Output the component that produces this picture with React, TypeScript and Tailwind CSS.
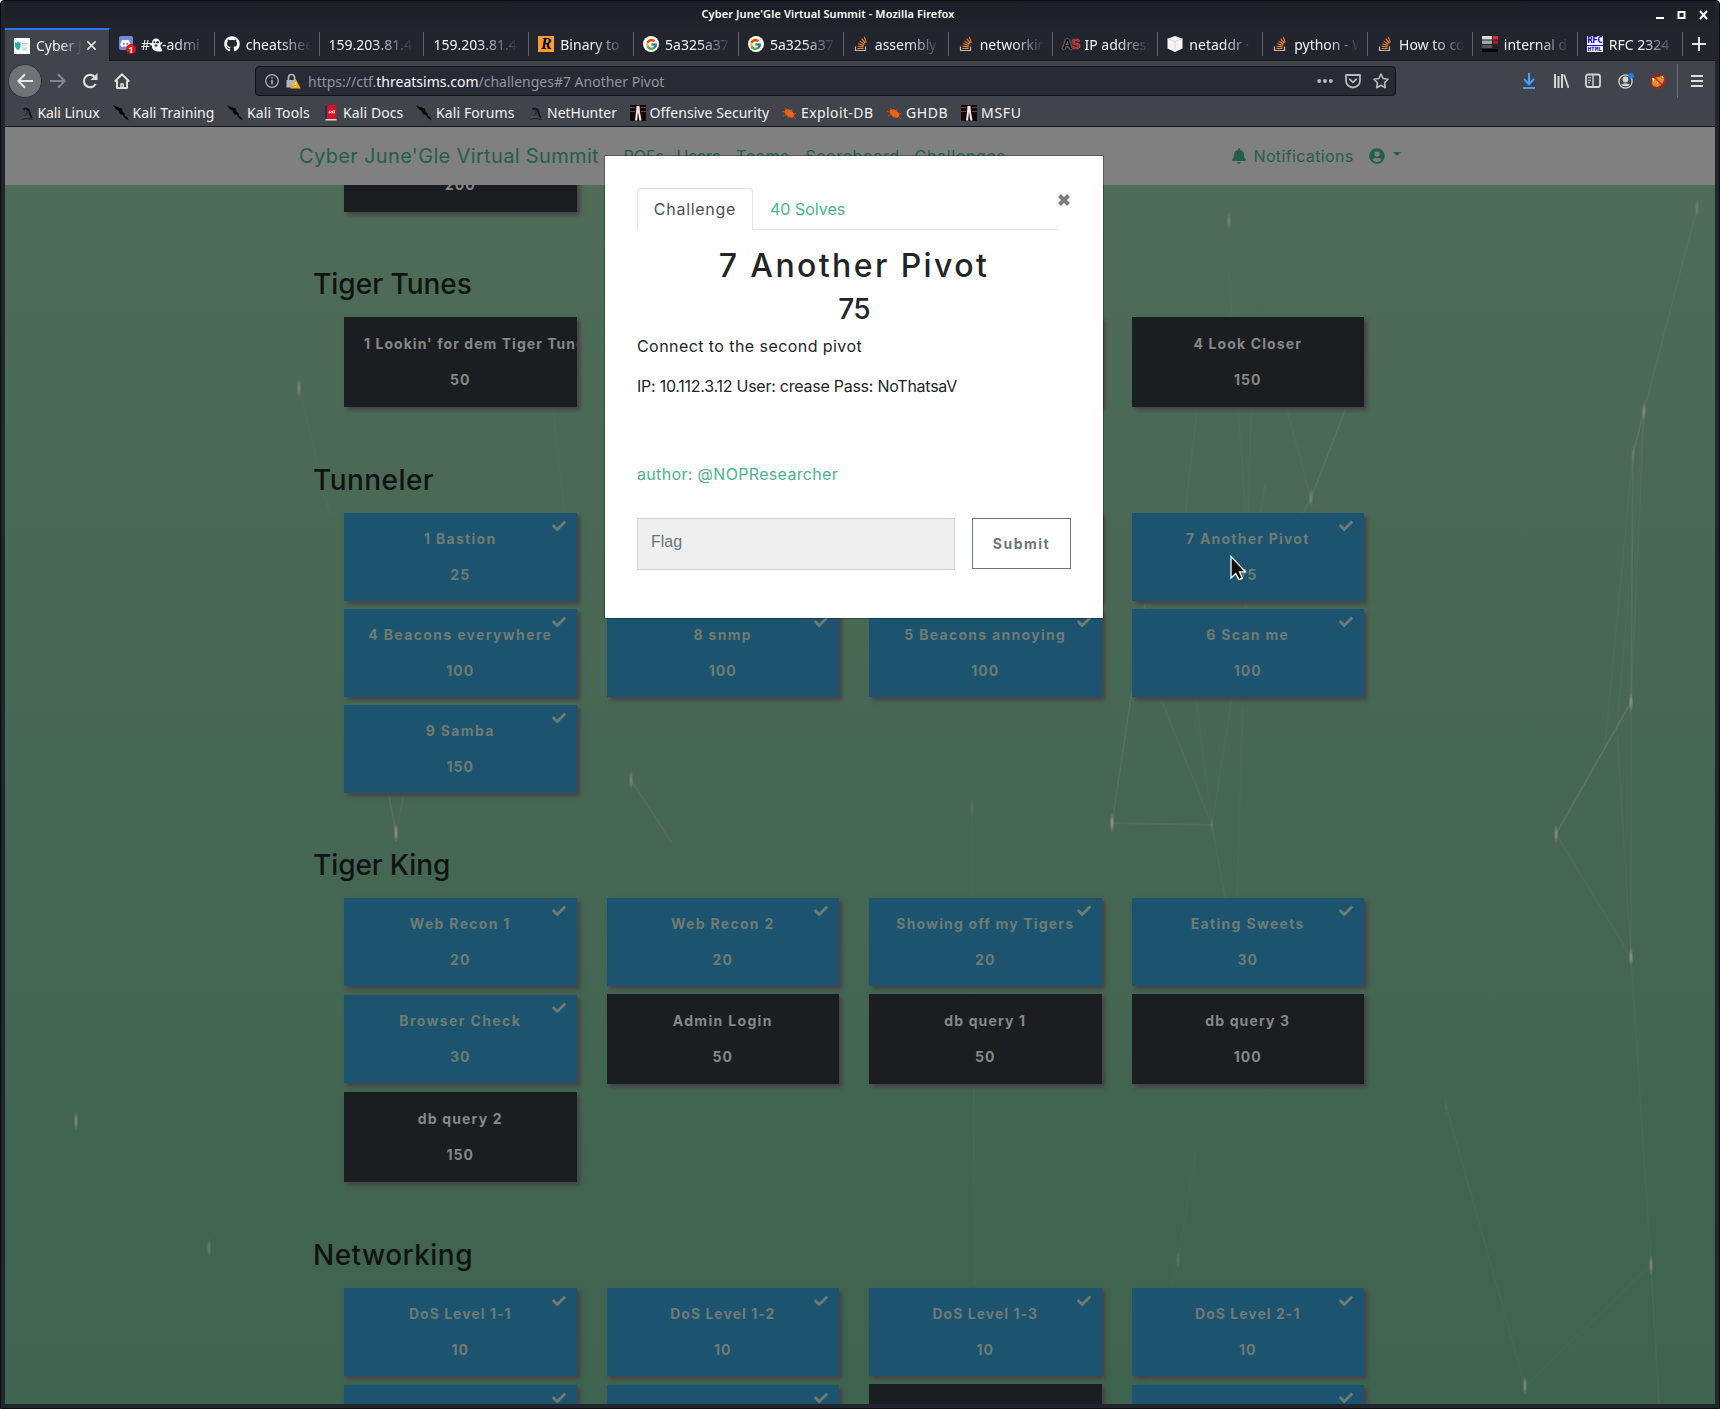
import type { ReactNode } from "react";
import { FaBell, FaCheck, FaDiscord, FaGithub, FaUserCircle } from "react-icons/fa";
import { FcGoogle } from "react-icons/fc";

/* ---------- favicons ---------- */

const StackIcon = () => (
  <svg viewBox="0 0 16 16" className="size-4" fill="none">
    <path d="M2.5 10.5v4h10v-4" stroke="#bcbbbb" strokeWidth="1.2" />
    <path d="M4.5 12.5h6M4.6 10.3l6 .6M5.2 7.8l5.7 1.6M6.6 5.1l5 3.1M8.6 2.6l3.7 4.5M11.4 1l1.8 5.6" stroke="#f48024" strokeWidth="1.1" />
  </svg>
);

const SummitIcon = () => (
  <svg viewBox="0 0 16 16" className="size-4">
    <rect width="16" height="16" fill="#fff" />
    <path d="M1 4l1.500 1L4 3l1 2 1.500-1v5l-1.500 3-2-1-2-2z" fill="#2a9fd8" />
    <path d="M3 7l2 1-1 4-2-2z" fill="#3db65c" />
    <path d="M7.500 5.500H14M7.500 7H13M8.500 10h4.500M8.500 11.500h4" stroke="#8fd5b8" strokeWidth=".9" />
  </svg>
);

const DiscordIcon = () => (
  <span className="relative block size-4">
    <span className="flex size-[14px] items-center justify-center rounded-[2px] bg-[#7289da] text-white">
      <FaDiscord size={11} />
    </span>
    <span className="absolute -right-px -bottom-[2px] flex size-[10px] items-center justify-center rounded-full bg-[#dc1414] text-[9px] leading-none font-bold text-white">
      1
    </span>
  </span>
);

const RapidIcon = () => (
  <span className="flex size-4 items-center justify-center bg-[#ff9d2e] font-['Liberation_Serif',serif] text-[16px] leading-none font-bold text-black italic">R</span>
);

const GoogleIcon = () => (
  <span className="flex size-4 items-center justify-center rounded-full bg-white">
    <FcGoogle size={13} />
  </span>
);

const AsIcon = () => (
  <span className="flex size-4 items-center justify-center font-['Liberation_Sans',sans-serif] text-[14px] leading-none font-bold tracking-[-1.5px]">
    <span className="text-black [text-shadow:0_0_1px_#ddd,0_0_2px_#999]">A</span>
    <span className="text-[#c8202c] [text-shadow:0_0_1px_#bbb]">S</span>
  </span>
);

const CubeIcon = () => (
  <svg viewBox="0 0 16 16" className="size-4">
    <path d="M8 0l7.500 2.700v9.800L8 16 .5 12.500V2.700z" fill="#f5f3f1" />
    <path d="M.5 2.700L8 5.500l7.500-2.800M8 5.500V16" stroke="#d9d5d2" strokeWidth=".9" fill="none" />
  </svg>
);

const BarsIcon = () => (
  <svg viewBox="0 0 16 16" className="size-4">
    <path d="M0 0h10v3.500H0z" fill="#d8d8d8" />
    <path d="M0 4.500h10V8H0z" fill="#a5a5a8" />
    <path d="M0 9h10v3H0z" fill="#55565c" />
    <path d="M0 13h16v3H0z" fill="#050505" />
    <path d="M11 0h5v3.500h-5z" fill="#f0262c" />
    <path d="M11 4.500h5V8h-5z" fill="#96222a" />
    <path d="M11 9h5v3h-5z" fill="#35191f" />
  </svg>
);

const RfcIcon = () => (
  <span className="flex size-4 flex-col items-center bg-white font-['DejaVu_Sans_Mono',monospace] font-bold text-[#0b00ee]">
    <span className="block h-[9px] text-[9px] leading-[9px] tracking-[-0.5px]">RFC</span>
    <span className="block h-px w-full bg-[#0b00ee]" />
    <span className="block h-[6px] text-[6px] leading-[6px]">HTML</span>
  </span>
);

const Ghost = () => (
  <svg viewBox="0 0 14 14" className="-mx-px inline size-[14px] align-[-2px]">
    <path d="M7 .5c2.700 0 4 2 4 4l2.300-.6c.5 1.400-.6 2.600-2 3 .3 2.500 1.500 4 2.200 6-2.500.9-7.500 1-9.500-1.500C2.700 9.800 3 8.500 3 7.500 1.500 7.600.3 6.500.5 5L3 5C3 2.500 4.500.5 7 .5z" fill="#f4f6f8" />
    <circle cx="5.400" cy="4.200" r="1" fill="#222" />
    <circle cx="8.600" cy="4.200" r="1.200" fill="#222" />
    <ellipse cx="7" cy="7.500" rx="1.500" ry="1.200" fill="#444" />
  </svg>
);

type Tab = { label: ReactNode; icon?: ReactNode };
const tabs: Tab[] = [
  { label: <>#<Ghost />-admi</>, icon: <DiscordIcon /> },
  { label: "cheatshee", icon: <FaGithub size={16} className="text-white" /> },
  { label: "159.203.81.4" },
  { label: "159.203.81.4" },
  { label: "Binary to", icon: <RapidIcon /> },
  { label: "5a325a37", icon: <GoogleIcon /> },
  { label: "5a325a37", icon: <GoogleIcon /> },
  { label: "assembly", icon: <StackIcon /> },
  { label: "networkin", icon: <StackIcon /> },
  { label: "IP address", icon: <AsIcon /> },
  { label: "netaddr ·", icon: <CubeIcon /> },
  { label: "python - W", icon: <StackIcon /> },
  { label: "How to co", icon: <StackIcon /> },
  { label: "internal d", icon: <BarsIcon /> },
  { label: "RFC 2324", icon: <RfcIcon /> },
];

/* ---------- bookmark icons ---------- */

const DragonIcon = () => (
  <svg viewBox="0 0 16 16" className="size-4" fill="none">
    <path d="M5.500 4.500C8 2.500 11 4 11.500 7c.3 2.500.5 4 2.500 6" stroke="#101012" strokeWidth="1.700" />
    <path d="M8.500 4.500c1.500 3 .5 5.500-3 7M3 14.500c4-2 8-1 12 .2" stroke="#25262a" strokeWidth="1.200" />
    <path d="M3.500 13.500c1.500-2 4-2.500 6-1.500" stroke="#5c5e64" strokeWidth="1" />
  </svg>
);

const SlashIcon = () => (
  <svg viewBox="0 0 16 16" className="size-4">
    <path d="M0 0l4 2 5 1.500.5 3L12 9l-.5 1.500 2.500 1.500 1.800 3.500-4-2.500-2-3-3-1-1-3L2.500 4z" fill="#060607" />
  </svg>
);

const DocsIcon = () => (
  <svg viewBox="0 0 16 16" className="size-4">
    <path d="M2 0h11.500v14H2z" fill="#d8121f" />
    <path d="M2 0h2v15H2z" fill="#16355f" />
    <path d="M2.500 14h11v1.500h-11z" fill="#d9d9d9" />
    <path d="M7 5.500L6 8M9 5.500v3M11 5l.5 3M6.500 8.500L9 6l2 2.500" stroke="#fff" strokeWidth=".9" fill="none" />
  </svg>
);

const OffsecIcon = () => (
  <svg viewBox="0 0 16 16" className="size-4">
    <path d="M0 0h16v16H0z" fill="#160607" />
    <path d="M0 2h5v1H0zM0 6h5v1H0zM11 2h5v1h-5zM11 6h5v1h-5z" fill="#6d4246" />
    <path d="M6.500 1h3l.5 6 1.500 8.500H9.300L8 7l-.8 8.500H5L6 7z" fill="#e9e7e5" />
  </svg>
);

const SpiderIcon = () => (
  <svg viewBox="0 0 16 16" className="size-4">
    <ellipse cx="8.500" cy="8.500" rx="5.500" ry="3.300" transform="rotate(35 8.500 8.500)" fill="#f26314" />
    <path d="M4 3l3 3M1 6.500l4 .5M2 11l4-2M7 13l1-2M11 4l-1 3M15 8.500l-3 .5M15 14l-3-3" stroke="#c9541a" strokeWidth=".9" />
  </svg>
);

const bookmarks: { label: string; icon: ReactNode; width: string }[] = [
  { label: "Kali Linux", icon: <DragonIcon />, width: "w-[95px] tracking-[-0.1px]" },
  { label: "Kali Training", icon: <SlashIcon />, width: "w-[114.5px] tracking-[0.08px]" },
  { label: "Kali Tools", icon: <SlashIcon />, width: "w-[96px] tracking-[0.15px]" },
  { label: "Kali Docs", icon: <DocsIcon />, width: "w-[93px] tracking-[0.1px]" },
  { label: "Kali Forums", icon: <SlashIcon />, width: "w-[111px] tracking-[0.1px]" },
  { label: "NetHunter", icon: <DragonIcon />, width: "w-[102.5px]" },
  { label: "Offensive Security", icon: <OffsecIcon />, width: "w-[151.5px] tracking-[0.06px]" },
  { label: "Exploit-DB", icon: <SpiderIcon />, width: "w-[105px] tracking-[0.4px]" },
  { label: "GHDB", icon: <SpiderIcon />, width: "w-[75px] tracking-[0.6px]" },
  { label: "MSFU", icon: <OffsecIcon />, width: "w-[75px] tracking-[0.7px]" },
];

/* ---------- browser chrome ---------- */

function TitleBar() {
  return (
    <div className="flex h-[27px] items-center bg-linear-to-b from-[#1b1d25] to-[#23252e]">
      <div className="w-[1651px] pr-[5px] text-center text-[11px] font-semibold tracking-[0.1px] text-white">Cyber June'Gle Virtual Summit - Mozilla Firefox</div>
      <svg viewBox="0 0 52 10" className="h-[10px] w-[52px]" fill="none" stroke="#fff" strokeWidth="2">
        <path d="M0 8h8" />
        <path d="M22.500 2h6v6h-6z" />
        <path d="M44 1l7 8M51 1l-7 8" />
      </svg>
    </div>
  );
}

function TabBar() {
  return (
    <div className="flex h-[33px] bg-[#23252e]">
      <div className="flex w-[104.900px] shrink-0 items-center border-t-2 border-r border-[#2a76fb] border-r-[#15161b] bg-[#42444b] pl-[9px] text-[14px] text-[#f3f3f4]">
        <SummitIcon />
        <span className="ml-[6px] w-[50px] overflow-hidden whitespace-nowrap [mask-image:linear-gradient(to_right,#000_50%,transparent_92%)]">Cyber J</span>
        <svg viewBox="0 0 12 12" className="size-[11px]" stroke="#e4e4e5" strokeWidth="1.700">
          <path d="M1.500 1.500l9 9M10.500 1.500l-9 9" />
        </svg>
      </div>
      <div className="flex grow border-b border-[#15161b]">
        {tabs.map((tab, i) => (
          <div key={i} className="flex w-[104.850px] shrink-0 items-center pl-[9px]">
            {tab.icon && <span className="mr-[6px] flex size-4 shrink-0 items-center justify-center">{tab.icon}</span>}
            <span className="min-w-0 grow overflow-hidden text-[14px] whitespace-nowrap text-[#f3f3f4] [mask-image:linear-gradient(to_right,#000_45%,transparent_90%)]">{tab.label}</span>
            <span className="h-6 w-px shrink-0 bg-[#63656c]" />
          </div>
        ))}
        <div className="flex grow items-center justify-center">
          <svg viewBox="0 0 14 14" className="size-[14px]" stroke="#e4e4e5" strokeWidth="2">
            <path d="M7 0v14M0 7h14" />
          </svg>
        </div>
      </div>
    </div>
  );
}

function AddressBar() {
  return (
    <div className="flex h-[30px] w-[1141px] shrink-0 items-center rounded-[4px] border border-[#101116] bg-[#282a36] pl-[9px] text-[14px]">
      <svg viewBox="0 0 14 14" className="size-[14px]" fill="none" stroke="#b3b4b9" strokeWidth="1.200">
        <circle cx="7" cy="7" r="6.300" />
        <path d="M7 6v4.500M7 3.300v1.500" strokeWidth="1.600" />
      </svg>
      <svg viewBox="0 0 16 16" className="ml-[6px] size-4">
        <path d="M3.500 7V4.500a3 3 0 0 1 6 0V7" stroke="#b3b4b9" strokeWidth="1.700" fill="none" />
        <path d="M1.500 7h9v7.500h-9z" fill="#b3b4b9" />
        <path d="M10.500 5.500l5.200 10H5.300z" fill="#f5a81c" />
        <path d="M10.500 9v3.200M10.500 13v1.300" stroke="#fff" strokeWidth="1.300" />
      </svg>
      <span className="ml-[7px] grow text-[#94959b]">
        https://ctf.<span className="text-[#f8f8f9]">threatsims.com</span>/challenges#7 Another Pivot
      </span>
      <svg viewBox="0 0 16 16" className="size-4" fill="#b9babd">
        <circle cx="2.200" cy="8" r="2" />
        <circle cx="8" cy="8" r="2" />
        <circle cx="13.800" cy="8" r="2" />
      </svg>
      <svg viewBox="0 0 16 16" className="ml-[12px] size-4" fill="none" stroke="#b9babd" strokeWidth="1.800" strokeLinecap="round" strokeLinejoin="round">
        <path d="M1 2h14v5.500a7 7 0 0 1-14 0z" />
        <path d="M4.800 6.300L8 9.300l3.200-3" />
      </svg>
      <svg viewBox="0 0 16 16" className="mr-[6px] ml-[12px] size-4" fill="none" stroke="#b9babd" strokeWidth="1.600" strokeLinejoin="round">
        <path d="M8 1l2.100 4.500 4.900.7-3.500 3.500.8 5L8 12.300l-4.300 2.400.8-5L1 6.200l4.900-.7z" />
      </svg>
    </div>
  );
}

function Toolbar() {
  return (
    <div className="flex h-[40px] items-center bg-[#42444b] pl-[3px]">
      <div className="flex size-[34px] shrink-0 items-center justify-center rounded-full border border-[#303138] bg-[#717277]">
        <svg viewBox="0 0 16 16" className="size-4" fill="none" stroke="#e6e6e4" strokeWidth="2">
          <path d="M16 8H1.500M8 1.200L1.300 8 8 14.800" />
        </svg>
      </div>
      <svg viewBox="0 0 16 16" className="ml-[8px] size-4" fill="none" stroke="#85868b" strokeWidth="2">
        <path d="M0 8h14.500M8 1.200L14.700 8 8 14.800" />
      </svg>
      <svg viewBox="0 0 16 16" className="ml-[16px] size-4" fill="none" stroke="#deded9" strokeWidth="2.100">
        <path d="M13.300 4.600A6.200 6.200 0 1 0 13.600 11" />
        <path d="M15.500 0v7h-7z" fill="#deded9" stroke="none" />
      </svg>
      <svg viewBox="0 0 16 16" className="ml-[16px] size-4" fill="none" stroke="#deded9" strokeWidth="2" strokeLinejoin="round">
        <path d="M.8 8.500L8 1.300l7.200 7.200M3 7.500V15h10V7.500" />
        <path d="M7 15v-4h2.200v4" strokeWidth="1.500" />
      </svg>
      <div className="w-[125px] shrink-0" />
      <AddressBar />
      <svg viewBox="0 0 16 16" className="ml-[125px] size-4" fill="none" stroke="#45a1ff" strokeWidth="2">
        <path d="M8 0v11M3 6l5 5.300L13 6M2 15h12" />
      </svg>
      <svg viewBox="0 0 16 16" className="ml-[16px] size-4" fill="none" stroke="#d4d4d2" strokeWidth="2">
        <path d="M2 1v14M5.500 3v12M9 1v14" />
        <path d="M11 1.500L15.500 15" strokeWidth="1.700" />
      </svg>
      <svg viewBox="0 0 16 16" className="ml-[16px] size-4" fill="none" stroke="#d4d4d2" strokeWidth="1.800">
        <rect x="1" y="1.500" width="14" height="12.500" rx="2" />
        <path d="M8 1.500V14" strokeWidth="1.400" />
        <path d="M3 4.800h3M3 7.300h3M3 9.800h2" strokeWidth="1.100" />
      </svg>
      <svg viewBox="0 0 16 16" className="ml-[17px] size-4">
        <circle cx="7.500" cy="8.500" r="6.600" fill="none" stroke="#d4d4d2" strokeWidth="1.300" />
        <circle cx="7.500" cy="6.500" r="2.900" fill="#d4d4d2" />
        <path d="M3.200 12c1-2 7.600-2 8.600 0-1 1.500-7.600 1.500-8.600 0z" fill="#d4d4d2" />
        <circle cx="13" cy="2.800" r="2.800" fill="#0a84ff" />
      </svg>
      <svg viewBox="0 0 16 16" className="ml-[16px] size-4">
        <path d="M2 9c2-5 4-5 7-5l4-2 1 5-2 5-5 2-5-1z" fill="#ee8a1c" />
        <path d="M1.500 4.500l3 1-1 3.500zM12 2l2.500 3-2.500 0zM7 8l2 1-2 2z" fill="#fff" />
        <circle cx="8" cy="8" r="7.200" fill="none" stroke="#c5171a" strokeWidth="1.300" />
        <path d="M3 3l10 10" stroke="#c5171a" strokeWidth="1.300" />
      </svg>
      <span className="ml-[11px] h-[34px] w-px bg-[#6b6d73]" />
      <svg viewBox="0 0 12 12" className="ml-[13px] size-3" stroke="#e0e0de" strokeWidth="2">
        <path d="M0 1h12M0 6h12M0 11h12" />
      </svg>
    </div>
  );
}

function BookmarkBar() {
  return (
    <div className="flex h-[26px] items-center border-b border-[#111217] bg-[#42444b] pb-px pl-[12.500px]">
      {bookmarks.map((b) => (
        <div key={b.label} className={`flex shrink-0 items-center gap-1 text-[14px] leading-5 whitespace-nowrap text-[#f3f3f4] ${b.width}`}>
          <span className="size-4 shrink-0">{b.icon}</span>
          {b.label}
        </div>
      ))}
    </div>
  );
}

/* ---------- page ---------- */

function Navbar() {
  return (
    <nav className="flex h-[58px] shrink-0 items-center bg-[#808080] pl-[294px] text-[16px] text-[#235f4b]">
      <span className="w-[324.500px] text-[20px] tracking-[0.34px]">Cyber June'Gle Virtual Summit</span>
      <span className="w-[53px]">POFs</span>
      <span className="w-[59.500px]">Users</span>
      <span className="w-[69.500px] tracking-[0.7px]">Teams</span>
      <span className="w-[109px] tracking-[0.6px]">Scoreboard</span>
      <span className="w-[316px] tracking-[0.7px]">Challenges</span>
      <FaBell size={16} />
      <span className="ml-[7px] w-[115px] tracking-[0.35px]">Notifications</span>
      <FaUserCircle size={16} />
      <span className="mb-1 ml-[8px] border-x-[4.500px] border-t-[4.500px] border-x-transparent border-t-[#235f4b]" />
    </nav>
  );
}

type Challenge = { title: string; value: string; solved?: boolean; tracking?: string };

function Card({ title, value, solved, tracking = "" }: Challenge) {
  return (
    <div
      className={`relative overflow-hidden px-5 text-center text-[14px] leading-6 font-bold shadow-[3px_3px_4px_#484046] ${
        solved ? "h-[88px] bg-[#1c536f] pt-[14px] text-[#6e7c73]" : "h-[90px] bg-[#1b1e20] pt-[15px] text-[#868787]"
      }`}
    >
      {solved && <FaCheck size={14} className="absolute top-[6px] right-[11px]" />}
      <p className={`mb-3 h-6 whitespace-nowrap ${tracking}`}>{title}</p>
      <p className="tracking-[1px]">{value}</p>
    </div>
  );
}

const sections: { name: string; heading: string; cards: Challenge[] }[] = [
  {
    name: "Tiger Tunes",
    heading: "mt-[55px]",
    cards: [
      { title: "1 Lookin' for dem Tiger Tunes", value: "50", tracking: "tracking-[1.04px]" },
      { title: "", value: "" },
      { title: "", value: "" },
      { title: "4 Look Closer", value: "150", tracking: "tracking-[1.14px]" },
    ],
  },
  {
    name: "Tunneler",
    heading: "mt-[56px] tracking-[0.45px]",
    cards: [
      { title: "1 Bastion", value: "25", solved: true, tracking: "tracking-[1.3px]" },
      { title: "", value: "", solved: true },
      { title: "", value: "", solved: true },
      { title: "7 Another Pivot", value: "75", solved: true, tracking: "tracking-[1.22px]" },
      { title: "4 Beacons everywhere", value: "100", solved: true, tracking: "tracking-[1.36px]" },
      { title: "8 snmp", value: "100", solved: true, tracking: "tracking-[1.3px]" },
      { title: "5 Beacons annoying", value: "100", solved: true, tracking: "tracking-[1.3px]" },
      { title: "6 Scan me", value: "100", solved: true, tracking: "tracking-[1.3px]" },
      { title: "9 Samba", value: "150", solved: true, tracking: "tracking-[1.35px]" },
    ],
  },
  {
    name: "Tiger King",
    heading: "mt-[55px] tracking-[-0.1px]",
    cards: [
      { title: "Web Recon 1", value: "20", solved: true, tracking: "tracking-[1.3px]" },
      { title: "Web Recon 2", value: "20", solved: true, tracking: "tracking-[1.3px]" },
      { title: "Showing off my Tigers", value: "20", solved: true, tracking: "tracking-[1.16px]" },
      { title: "Eating Sweets", value: "30", solved: true, tracking: "tracking-[1.32px]" },
      { title: "Browser Check", value: "30", solved: true, tracking: "tracking-[1.38px]" },
      { title: "Admin Login", value: "50", tracking: "tracking-[1.33px]" },
      { title: "db query 1", value: "50", tracking: "tracking-[1.15px]" },
      { title: "db query 3", value: "100", tracking: "tracking-[1.15px]" },
      { title: "db query 2", value: "150", tracking: "tracking-[1.15px]" },
    ],
  },
  {
    name: "Networking",
    heading: "mt-[56px] tracking-[0.45px]",
    cards: [
      { title: "DoS Level 1-1", value: "10", solved: true, tracking: "tracking-[1.02px]" },
      { title: "DoS Level 1-2", value: "10", solved: true, tracking: "tracking-[1.02px]" },
      { title: "DoS Level 1-3", value: "10", solved: true, tracking: "tracking-[1.02px]" },
      { title: "DoS Level 2-1", value: "10", solved: true, tracking: "tracking-[1.02px]" },
      { title: "", value: "", solved: true },
      { title: "", value: "", solved: true },
      { title: "", value: "" },
      { title: "", value: "", solved: true },
    ],
  },
];

/* Particle network behind the challenge board: [x, y, opacity] and [x1, y1, x2, y2, opacity]. */
const nodes = [
  [294, 203, 0.6], [1224, 36, 0.5], [1692, 23, 0.4], [1639, 226, 0.6], [1628, 269, 0.3], [1306, 313, 0.5], [1626, 517, 0.8], [1551, 649, 0.7],
  [1626, 772, 0.8], [1107, 638, 0.9], [1207, 640, 0.2], [626, 595, 0.6], [391, 648, 0.8], [967, 623, 0.2], [71, 936, 0.7], [204, 1063, 0.4],
  [1441, 920, 0.1], [1646, 1080, 0.7], [1520, 1201, 0.7], [1173, 1075, 0.25],
];
const links = [
  [1692, 23, 1639, 226, 0.16], [1639, 226, 1628, 269, 0.3], [1628, 269, 1626, 517, 0.22], [1639, 226, 1626, 517, 0.14], [1628, 269, 1600, 560, 0.1],
  [1639, 226, 1612, 545, 0.1], [1612, 545, 1626, 772, 0.12], [1626, 517, 1551, 649, 0.38], [1626, 517, 1626, 772, 0.16], [1551, 649, 1626, 772, 0.14],
  [1626, 772, 1646, 1080, 0.1], [1646, 1080, 1654, 1219, 0.14], [1107, 638, 1207, 640, 0.2], [1107, 638, 1146, 380, 0.22], [1207, 640, 1138, 470, 0.13],
  [1207, 640, 1187, 480, 0.1], [1207, 640, 1260, 300, 0.11], [1207, 640, 1232, 780, 0.12], [1230, 790, 1246, 226, 0.08], [1306, 313, 1346, 210, 0.25],
  [1306, 313, 1258, 410, 0.2], [1306, 313, 1278, 210, 0.1], [1174, 380, 1192, 226, 0.1], [1244, 380, 1222, 60, 0.08], [626, 595, 667, 658, 0.2],
  [391, 648, 380, 590, 0.25], [391, 648, 403, 590, 0.15], [294, 203, 325, 330, 0.08], [1441, 920, 1520, 1201, 0.1],
  [1520, 1201, 1646, 1080, 0.07], [1551, 649, 1460, 870, 0.04], [1173, 1075, 1192, 960, 0.08], [1173, 1075, 1140, 1219, 0.07],
  [967, 623, 970, 1100, 0.07], [548, 226, 570, 420, 0.06], [1224, 36, 1300, 226, 0.04],
];

function Particles() {
  return (
    <svg viewBox="0 0 1710 1219" className="absolute inset-0 h-full w-full" stroke="#8b8389">
      <defs>
        <radialGradient id="dot">
          <stop offset="0.3" stopColor="#918e90" />
          <stop offset="1" stopColor="#918e90" stopOpacity="0" />
        </radialGradient>
      </defs>
      {links.map(([x1, y1, x2, y2, o], i) => (
        <line key={i} x1={x1} y1={y1} x2={x2} y2={y2} strokeOpacity={o} strokeWidth="1.800" />
      ))}
      {nodes.map(([x, y, o], i) => (
        <ellipse key={i} cx={x} cy={y} rx="2.400" ry="10" fill="url(#dot)" stroke="none" opacity={o} />
      ))}
    </svg>
  );
}

function Board() {
  return (
    <main className="relative h-[1219px] overflow-hidden bg-linear-to-b from-[#4e6c57] via-[#466753] to-[#3e634e]">
      <Particles />
      <div className="relative ml-[309px] w-[1080px]">
        <div className="flex h-[27px] items-end pl-[30px]">
          <div className="w-[232.500px] shrink-0">
            <Card title="" value="200" />
          </div>
        </div>
        {sections.map((s) => (
          <section key={s.name}>
            <h3 className={`mb-4 -ml-px text-[28px] leading-[34px] font-medium text-[#101214] ${s.heading}`}>{s.name}</h3>
            <div className="ml-[30px] grid w-[1020px] grid-cols-4 items-center gap-x-[30px] gap-y-2">
              {s.cards.map((c, i) => (
                <Card key={i} {...c} />
              ))}
            </div>
          </section>
        ))}
      </div>
    </main>
  );
}

function ChallengeModal() {
  return (
    <div className="absolute top-[155px] left-[604px] h-[464px] w-[500px] border border-[#0000004d] bg-white bg-clip-padding px-8 pt-8 text-[16px] leading-6 text-[#212529]">
      <div className="flex">
        <div className="flex h-[42px] w-[421px] border-b border-[#dee2e6]">
          <div className="h-[42px] w-[116px] rounded-t-[4px] border border-b-0 border-[#dee2e6] bg-white pt-2 text-center tracking-[0.72px] text-[#495057]">Challenge</div>
          <div className="pt-[9px] pl-[17px] text-[#4bb38b]">40 Solves</div>
        </div>
        <svg viewBox="0 0 12 12" className="mt-[6px] size-3" stroke="#7c7c7c" strokeWidth="4">
          <path d="M1.500 1.500l9 9M10.500 1.500l-9 9" />
        </svg>
      </div>
      <h2 className="mt-[17px] text-center text-[32px] leading-[38px] font-medium tracking-[2.400px]">7 Another Pivot</h2>
      <h3 className="mt-[7px] text-center text-[28px] leading-[34px] font-medium tracking-[-0.8px]">75</h3>
      <p className="mt-2 tracking-[0.43px]">Connect to the second pivot</p>
      <p className="mt-4 tracking-[-0.25px]">IP: 10.112.3.12 User: crease Pass: NoThatsaV</p>
      <p className="mt-16 tracking-[0.33px] text-[#4bb38b]">author: @NOPResearcher</p>
      <div className="mt-8 flex gap-[17px]">
        <div className="h-[52px] w-[318px] border border-[#ced4da] bg-[#efefef] pt-[11px] pl-[13px] font-['Liberation_Sans',sans-serif] text-[#6c757d]">Flag</div>
        <button className="flex h-[51px] w-[99px] justify-center border border-[#6c757d] pt-[13px] text-[14px] leading-6 font-bold tracking-[1.500px] text-[#6c757d]">Submit</button>
      </div>
    </div>
  );
}

function Cursor() {
  return (
    <svg viewBox="0 0 18 26" className="absolute top-[555px] left-[1230px] h-[26px] w-[18px]">
      <path d="M1 1.500v21.500l4.700-4.400 3.300 6 3.300-1.500-2.800-6.300h6z" fill="#0b0b0b" stroke="#fff" strokeWidth="1.300" />
    </svg>
  );
}

export default function App() {
  return (
    <div className="relative h-[1409px] w-[1720px] overflow-hidden rounded-t-[4px] border border-[#0b0c10] bg-[#22242e] px-1 font-['Noto_Sans',sans-serif]">
      <TitleBar />
      <TabBar />
      <Toolbar />
      <BookmarkBar />
      <div className="h-[1277px] overflow-hidden font-['Inter',sans-serif]">
        <Navbar />
        <Board />
      </div>
      <div className="absolute -top-px -left-px h-[1409px] w-[1720px]">
        <div className="font-['Inter',sans-serif]">
          <ChallengeModal />
        </div>
        <Cursor />
      </div>
    </div>
  );
}
